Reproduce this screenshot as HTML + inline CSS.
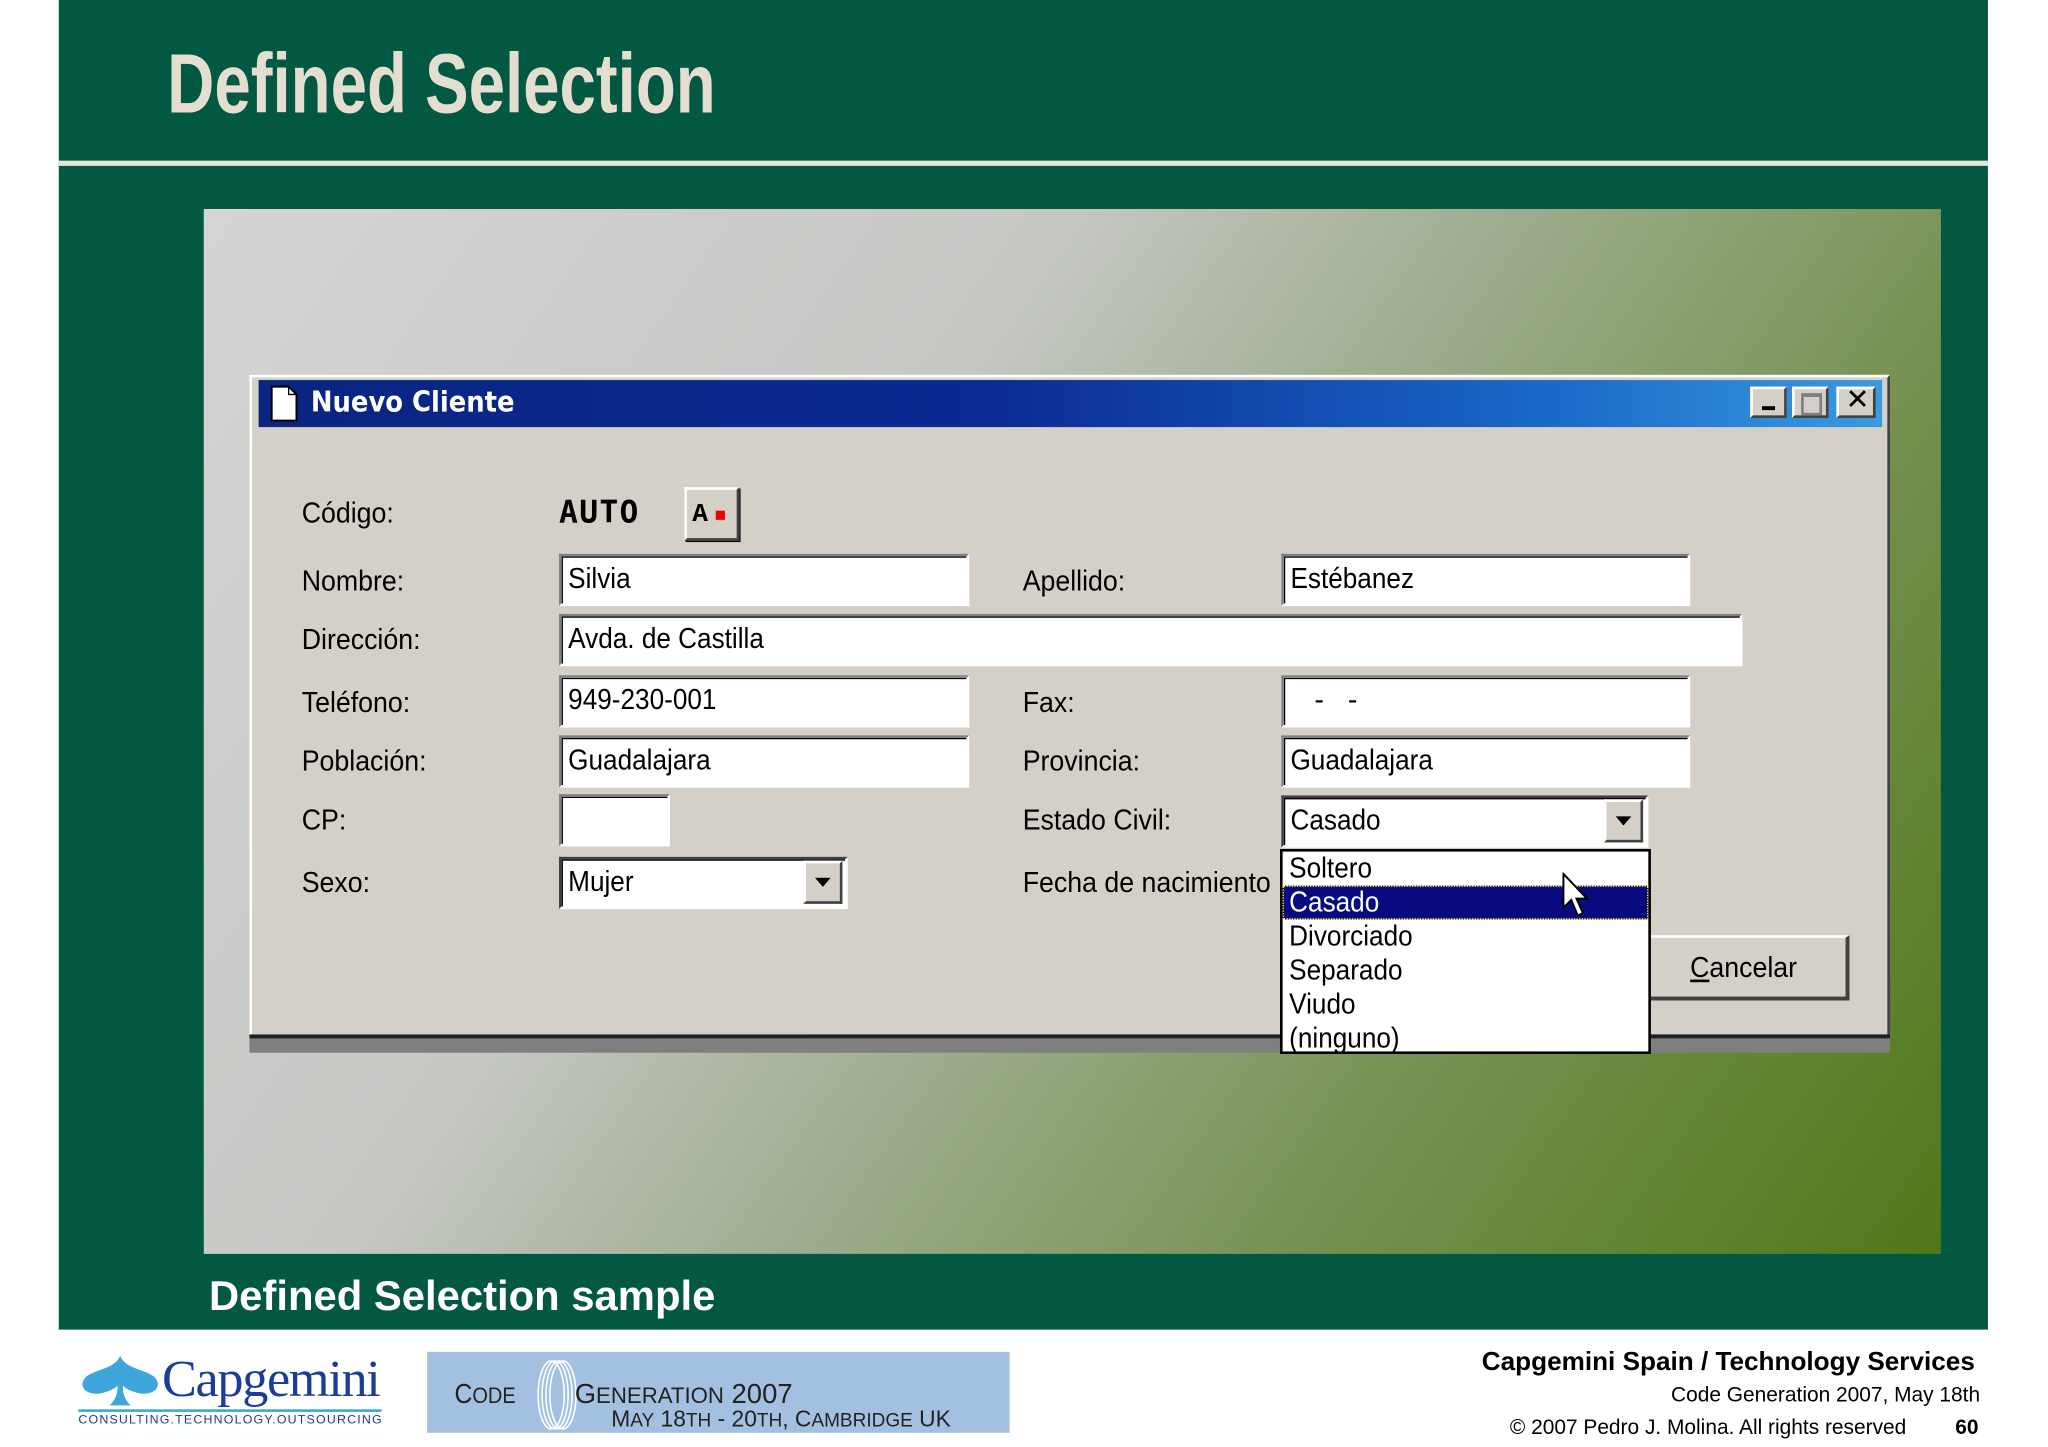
<!DOCTYPE html>
<html><head><meta charset="utf-8"><style>
html,body{margin:0;padding:0;background:#fff;overflow:hidden;width:2048px;height:1447px}
#w{position:absolute;left:0;top:0;width:1568px;height:1108px;transform:scale(1.30612);transform-origin:0 0;background:#fff;font-family:"Liberation Sans",sans-serif}
.a{position:absolute}
.g{left:45px;top:0;width:1477px;height:1018px;background:#025840}
.t{left:128px;top:26px;font:bold 65px "Liberation Sans",sans-serif;color:#e3ded0;transform:scaleX(0.77);transform-origin:0 0;white-space:nowrap}
.hl{left:45px;top:123px;width:1477px;height:4px;background:#e3e8d8}
.shot{left:156px;top:160px;width:1330px;height:800px;background:linear-gradient(125deg,#d4d4d4 0%,#c6c8c4 35%,#a0ae92 52%,#74904e 75%,#4f7818 100%)}
.dlg{left:191px;top:287px;width:1256px;height:505px;background:#d4d0c8;border-top:2px solid #fff;border-left:2px solid #fff;border-right:2px solid #404040;box-sizing:border-box}
.bot{left:191px;top:792px;width:1256px;height:14px;background:#7f7f7f;border-top:3px solid #202020;box-sizing:border-box}
.tb{left:198px;top:291px;width:1243px;height:36px;background:linear-gradient(90deg,#0a2480 0%,#0a2a94 45%,#1a6ac8 80%,#3a9ae0 100%)}
.tt{left:238px;top:296px;color:#fff;font:bold 22px "DejaVu Sans Condensed","Liberation Sans",sans-serif}
.wb{top:296px;width:28px;height:24px;background:#d4d0c8;border:2px solid;border-color:#fff #404040 #404040 #fff;box-sizing:border-box}
.l{font:22px "Liberation Sans",sans-serif;color:#000;transform:scaleX(0.93);transform-origin:0 0;white-space:nowrap}
.in{background:#fff;border:2px solid;border-color:#808080 #fff #fff #808080;box-shadow:inset 1px 1px 0 #000;box-sizing:border-box;font:22px "Liberation Sans",sans-serif;padding:4px 0 0 5px;white-space:nowrap}
.in span,.li span{display:inline-block;transform:scaleX(0.91);transform-origin:0 0}
.btn{background:#d4d0c8;border:2px solid;border-color:#fff #404040 #404040 #fff;box-sizing:border-box}
.arr{background:#d4d0c8;border:2px solid;border-color:#fff #404040 #404040 #fff;box-sizing:border-box}
.arr:after{content:"";position:absolute;left:7px;top:11px;border-left:6px solid transparent;border-right:6px solid transparent;border-top:7px solid #000}
.list{left:980px;top:650px;width:284px;height:157px;background:#fff;border:2px solid #000;box-sizing:border-box}
.li{position:absolute;left:5px;font:22px "Liberation Sans",sans-serif;height:26px;line-height:26px;white-space:nowrap}
.cap{left:160px;top:974px;font:bold 32px "Liberation Sans",sans-serif;color:#fff}
.f1{right:56px;top:1032px;font:bold 20px "Liberation Sans",sans-serif}
.f2{right:52px;top:1060px;font:16px "Liberation Sans",sans-serif}
.f3{left:1156px;top:1085px;font:16px "Liberation Sans",sans-serif}
</style></head><body><div id="w">
<div class="a g"></div>
<div class="a t">Defined Selection</div>
<div class="a hl"></div>
<div class="a shot"></div>
<div class="a dlg"></div>
<div class="a bot"></div>
<div class="a tb"></div>
<svg class="a" style="left:207px;top:295px" width="22" height="28"><path d="M1 1H14L20 7V27H1Z" fill="#fff" stroke="#000" stroke-width="1.5"/><path d="M14 1V7H20" fill="none" stroke="#000"/></svg>
<div class="a tt">Nuevo Cliente</div>
<div class="a wb" style="left:1340px"><div class="a" style="left:7px;top:13px;width:10px;height:3px;background:#000"></div></div>
<div class="a wb" style="left:1372px"><div class="a" style="left:5px;top:3px;width:12px;height:12px;border:2px solid #808080;border-top-width:3px"></div></div>
<div class="a wb" style="left:1406px;width:30px"><div class="a" style="left:5px;top:-4px;font:bold 22px 'DejaVu Sans',sans-serif">✕</div></div>

<div class="a l" style="left:231px;top:380px">Código:</div>
<div class="a" style="left:428px;top:378px;font:bold 24px 'DejaVu Sans Mono','Liberation Mono',monospace;letter-spacing:1px">AUTO</div>
<div class="a btn" style="left:524px;top:373px;width:42px;height:41px;box-shadow:1px 1px 0 #000"><div class="a" style="left:4px;top:8px;font:bold 20px 'Liberation Mono',monospace">A</div><div class="a" style="left:22px;top:16px;width:7px;height:7px;background:#e00"></div></div>

<div class="a l" style="left:231px;top:432px">Nombre:</div>
<div class="a in" style="left:428px;top:424px;width:314px;height:40px"><span>Silvia</span></div>
<div class="a l" style="left:783px;top:432px">Apellido:</div>
<div class="a in" style="left:981px;top:424px;width:313px;height:40px"><span>Estébanez</span></div>

<div class="a l" style="left:231px;top:477px">Dirección:</div>
<div class="a in" style="left:428px;top:470px;width:906px;height:40px"><span>Avda. de Castilla</span></div>

<div class="a l" style="left:231px;top:525px">Teléfono:</div>
<div class="a in" style="left:428px;top:517px;width:314px;height:40px"><span>949-230-001</span></div>
<div class="a l" style="left:783px;top:525px">Fax:</div>
<div class="a in" style="left:981px;top:517px;width:313px;height:40px">&nbsp;&nbsp;&nbsp;-&nbsp;&nbsp;&nbsp;-</div>

<div class="a l" style="left:231px;top:570px">Población:</div>
<div class="a in" style="left:428px;top:563px;width:314px;height:40px"><span>Guadalajara</span></div>
<div class="a l" style="left:783px;top:570px">Provincia:</div>
<div class="a in" style="left:981px;top:563px;width:313px;height:40px"><span>Guadalajara</span></div>

<div class="a l" style="left:231px;top:615px">CP:</div>
<div class="a in" style="left:428px;top:608px;width:85px;height:40px"></div>
<div class="a l" style="left:783px;top:615px">Estado Civil:</div>
<div class="a in" style="left:981px;top:609px;width:281px;height:40px;border-color:#404040 #fff #fff #404040"><span>Casado</span></div>
<div class="a arr" style="left:1228px;top:612px;width:30px;height:33px"></div>

<div class="a l" style="left:231px;top:663px">Sexo:</div>
<div class="a in" style="left:428px;top:656px;width:221px;height:40px;border-color:#404040 #fff #fff #404040"><span>Mujer</span></div>
<div class="a arr" style="left:615px;top:659px;width:30px;height:33px"></div>
<div class="a l" style="left:783px;top:663px">Fecha de nacimiento</div>

<div class="a btn" style="left:1262px;top:716px;width:154px;height:50px;border-width:2px 3px 3px 2px"><div class="a l" style="left:30px;top:10px"><u>C</u>ancelar</div></div>

<div class="a list">
<div class="li" style="top:0"><span>Soltero</span></div>
<div class="a" style="left:0;top:26px;width:280px;height:26px;background:#0a0a80;outline:1px dotted #ff0;outline-offset:-1px"></div>
<div class="li" style="top:26px;color:#fff"><span>Casado</span></div>
<div class="li" style="top:52px"><span>Divorciado</span></div>
<div class="li" style="top:78px"><span>Separado</span></div>
<div class="li" style="top:104px"><span>Viudo</span></div>
<div class="li" style="top:130px"><span>(ninguno)</span></div>
</div>
<svg class="a" style="left:1196px;top:668px" width="24" height="40"><path d="M1 1V27L7 21L12 33L16 31L11 20H19Z" fill="#fff" stroke="#000" stroke-width="1.5"/></svg>

<div class="a cap">Defined Selection sample</div>

<svg class="a" style="left:60px;top:1036px" width="64" height="42"><path d="M32 2C28 12 14 12 6 18C-2 26 8 34 20 30C24 29 28 27 30 25C30 32 28 36 24 40H40C36 36 34 32 34 25C36 27 40 29 44 30C56 34 66 26 58 18C50 12 36 12 32 2Z" fill="#3fa6dc"/></svg>
<div class="a" style="left:124px;top:1032px;font:40px 'Liberation Serif',serif;color:#1c3c9c;letter-spacing:-1px">Capgemini</div>
<div class="a" style="left:60px;top:1079px;width:232px;height:2px;background:#3fa6dc"></div>
<div class="a" style="left:60px;top:1082px;font:9.5px 'Liberation Sans',sans-serif;color:#1c3c9c;letter-spacing:0.9px;white-space:nowrap">CONSULTING.TECHNOLOGY.OUTSOURCING</div>

<div class="a" style="left:327px;top:1035px;width:446px;height:62px;background:#a4c0e0"></div>
<svg class="a" style="left:400px;top:1040px" width="50" height="56"><g fill="none" stroke="#fff" stroke-width="1.2"><ellipse cx="22" cy="28" rx="10" ry="26"/><ellipse cx="25" cy="28" rx="10" ry="26"/><ellipse cx="28" cy="28" rx="10" ry="26"/><ellipse cx="31" cy="28" rx="10" ry="26"/></g></svg>
<div class="a" style="left:348px;top:1056px;font:21px 'Liberation Sans',sans-serif;color:#222;transform:scaleX(0.9);transform-origin:0 0;white-space:nowrap">C<span style="font-size:17px">ODE</span></div>
<div class="a" style="left:440px;top:1056px;font:21px 'Liberation Sans',sans-serif;color:#222;transform:scaleX(1.0);transform-origin:0 0;white-space:nowrap">G<span style="font-size:17px">ENERATION</span> 2007</div>
<div class="a" style="left:468px;top:1076px;font:18px 'Liberation Sans',sans-serif;color:#222;transform:scaleX(0.97);transform-origin:0 0;white-space:nowrap">M<span style="font-size:15px">AY</span> 18<span style="font-size:15px">TH</span> - 20<span style="font-size:15px">TH</span>, C<span style="font-size:15px">AMBRIDGE</span> UK</div>

<div class="a f1">Capgemini Spain / Technology Services</div>
<div class="a f2">Code Generation 2007, May 18th</div>
<div class="a f3">© 2007 Pedro J. Molina. All rights reserved</div>
<div class="a" style="left:1497px;top:1085px;font:bold 16px 'Liberation Sans',sans-serif">60</div>
</div></body></html>
